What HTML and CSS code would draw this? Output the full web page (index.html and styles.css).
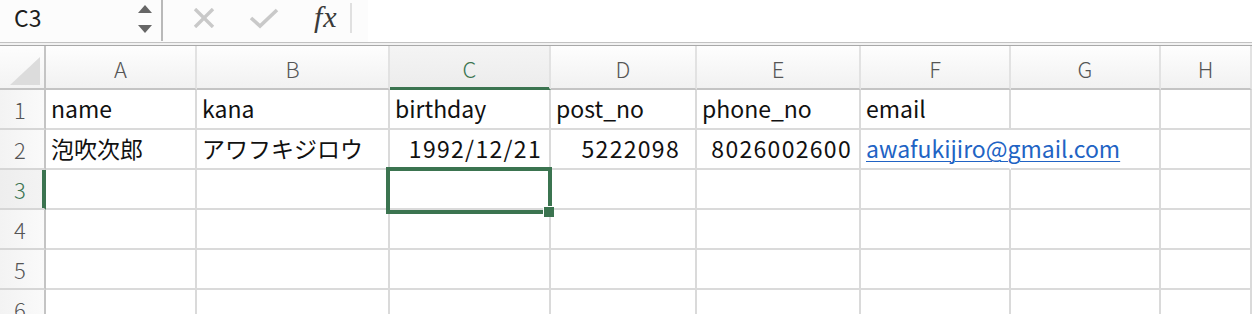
FILE: index.html
```html
<!DOCTYPE html>
<html lang="ja">
<head>
<meta charset="utf-8">
<title>Sheet</title>
<link rel="stylesheet" href="styles.css">
</head>
<body>
<div class="toolbar">
  <div class="namebox">
    <span class="ref">C3</span>
    <div class="spin">
      <svg width="14" height="30" viewBox="0 0 14 30"><polygon points="7,1 14,9 0,9" fill="#666"/><polygon points="0,21 14,21 7,29" fill="#666"/></svg>
    </div>
  </div>
  <div class="fbtns">
    <svg class="ico" width="24" height="20" viewBox="0 0 24 20"><path d="M3 1 L21 19 M21 1 L3 19" stroke="#c9c9c9" stroke-width="3.4" fill="none"/></svg>
    <svg class="ico chk" width="30" height="22" viewBox="0 0 30 22"><path d="M2 11 L11 19 L28 3" stroke="#c9c9c9" stroke-width="3.6" fill="none" stroke-linejoin="miter"/></svg>
    <span class="fx">fx</span>
    <span class="fsep"></span>
  </div>
  <div class="finput"></div>
</div>
<div class="divider"></div>
<div class="sheet">
  <div class="corner"><svg width="30" height="28" viewBox="0 0 30 28"><polygon points="30,0 30,28 0,28" fill="#dcdcdc"/></svg></div>
  <div class="ch">A</div>
  <div class="ch">B</div>
  <div class="ch sel">C</div>
  <div class="ch">D</div>
  <div class="ch">E</div>
  <div class="ch">F</div>
  <div class="ch">G</div>
  <div class="ch">H</div>

  <div class="rh">1</div>
  <div class="c">name</div>
  <div class="c">kana</div>
  <div class="c">birthday</div>
  <div class="c">post_no</div>
  <div class="c">phone_no</div>
  <div class="c">email</div>
  <div class="c"></div>
  <div class="c"></div>

  <div class="rh">2</div>
  <div class="c">泡吹次郎</div>
  <div class="c">アワフキジロウ</div>
  <div class="c num">1992/12/21</div>
  <div class="c num pad">5222098</div>
  <div class="c num">8026002600</div>
  <div class="c over"><a class="link" href="#">awafukijiro@gmail.com</a></div>
  <div class="c"></div>
  <div class="c"></div>

  <div class="rh rsel">3</div>
  <div class="c"></div>
  <div class="c"></div>
  <div class="c active"><span class="selbox"></span><span class="handle"></span></div>
  <div class="c"></div>
  <div class="c"></div>
  <div class="c"></div>
  <div class="c"></div>
  <div class="c"></div>

  <div class="rh">4</div>
  <div class="c"></div><div class="c"></div><div class="c"></div><div class="c"></div><div class="c"></div><div class="c"></div><div class="c"></div><div class="c"></div>

  <div class="rh">5</div>
  <div class="c"></div><div class="c"></div><div class="c"></div><div class="c"></div><div class="c"></div><div class="c"></div><div class="c"></div><div class="c"></div>

  <div class="rh">6</div>
  <div class="c"></div><div class="c"></div><div class="c"></div><div class="c"></div><div class="c"></div><div class="c"></div><div class="c"></div><div class="c"></div>
</div>
</body>
</html>
```

FILE: styles.css
```css
html, body {
  margin: 0;
  padding: 0;
  background: #ffffff;
  overflow: hidden;
  height: 314px;
  font-family: "Noto Sans CJK JP", "Noto Sans", sans-serif;
}

.toolbar {
  display: flex;
  height: 42px;
  background: #fcfcfc;
  border-bottom: 1px solid #c2c2c2;
}

.namebox {
  width: 163px;
  display: flex;
  align-items: center;
  justify-content: space-between;
  border-right: 2px solid #b9b9b9;
  height: 41px;
  box-sizing: border-box;
  padding: 0 9px 0 14px;
}

.ref {
  font-size: 23px;
  color: #1e1e1e;
  margin-top: -8px;
}

.spin {
  display: flex;
  align-items: center;
  margin-top: -4px;
}

.fbtns {
  width: 205px;
  display: flex;
  align-items: center;
  height: 36px;
}

.ico {
  margin-left: 29px;
}

.ico.chk {
  margin-left: 33px;
}

.fx {
  font-family: "Liberation Serif", "DejaVu Serif", serif;
  font-style: italic;
  font-size: 30px;
  color: #3a3a3a;
  margin-left: 35px;
  letter-spacing: 1px;
  margin-top: -2px;
}

.fsep {
  width: 2px;
  height: 30px;
  background: #e0e0e0;
  margin-left: 12px;
}

.finput {
  flex: 1;
  background: #ffffff;
}

.divider {
  height: 2px;
  background: #f2f2f2;
  border-bottom: 1px solid #a9a9a9;
}

.sheet {
  display: grid;
  grid-template-columns: 46px 151px 193px 161px 146px 164px 150px 150px 1fr;
  grid-template-rows: 44px repeat(6, 40px);
}

.sheet > div {
  box-sizing: border-box;
}

.corner {
  background: linear-gradient(#fdfdfd, #f3f3f3);
  border-right: 2px solid #c4c4c4;
  border-bottom: 2px solid #c4c4c4;
  padding: 11px 0 0 10px;
}

.corner svg {
  display: block;
}

.ch {
  background: linear-gradient(#fefefe, #f1f1f1);
  border-right: 2px solid #e2e2e2;
  border-bottom: 2px solid #c4c4c4;
  display: flex;
  align-items: center;
  justify-content: center;
  font-size: 22px;
  font-weight: 300;
  color: #555;
  padding-top: 1px;
}

.ch.sel {
  background: linear-gradient(#f4f4f4, #ececec);
  color: #3b7450;
  border-bottom-color: #3b7450;
  box-shadow: inset 0 -1px 0 #3b7450;
}

.rh {
  background: linear-gradient(90deg, #f3f3f3, #fafafa);
  border-right: 2px solid #c4c4c4;
  border-bottom: 2px solid #d6d6d6;
  display: flex;
  align-items: center;
  justify-content: center;
  font-size: 22px;
  font-weight: 300;
  color: #555;
  padding-right: 4px;
}

.rh.rsel {
  background: linear-gradient(90deg, #eeeeee, #f3f3f3);
  color: #3b7450;
  border-right-color: #3b7450;
  box-shadow: inset -2px 0 0 #3b7450;
}

.c {
  border-right: 2px solid #dadada;
  border-bottom: 2px solid #dadada;
  display: flex;
  align-items: center;
  padding: 0 6px 2px 5px;
  font-size: 23px;
  color: #111;
  white-space: nowrap;
  position: relative;
}

.c.num {
  justify-content: flex-end;
  padding-right: 7px;
  letter-spacing: 1.3px;
}

.c.num.pad {
  padding-right: 15px;
}

.c.over {
  border-right-color: transparent;
  overflow: visible;
  z-index: 1;
}

.link {
  color: #2163c4;
  text-decoration: underline;
  text-decoration-thickness: 1px;
  text-underline-offset: 3px;
}

.c.active {
  z-index: 2;
}

.selbox {
  position: absolute;
  left: -4px;
  top: -3px;
  width: 166px;
  height: 47px;
  box-sizing: border-box;
  border: 4px solid #3b7450;
}

.handle {
  position: absolute;
  left: 153px;
  top: 36px;
  width: 11px;
  height: 11px;
  background: #3b7450;
  border-left: 1px solid #fff;
  border-top: 1px solid #fff;
  box-sizing: border-box;
}
```
